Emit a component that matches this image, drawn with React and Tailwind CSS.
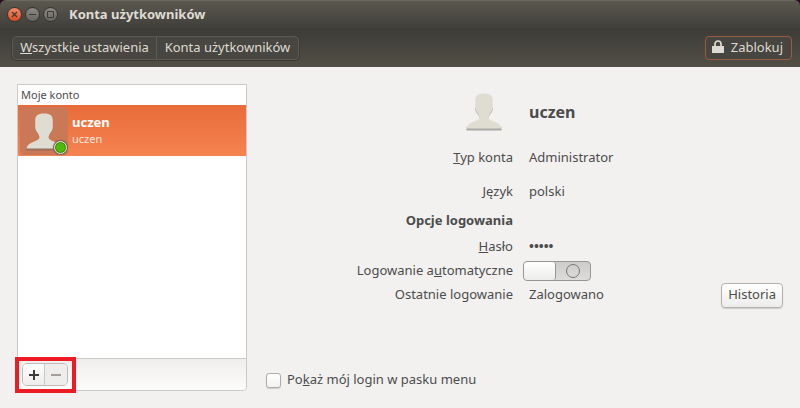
import React, { useState } from 'react'

function Person({ className }) {
  return (
    <svg viewBox="0 0 36 38" className={className} aria-hidden="true">
      <path
        d="M9 15c0 3 2 5.500 3.500 7l1 2.500h9l1-2.500c1.500-1.500 3.500-4 3.500-7zM.5 34v3.500h35V34z"
        fill="#6f6b64"
        fillOpacity="0.55"
      />
      <path
        d="M18 .5c-6.500 0-8.800 2-8.800 7.500v6c0 3 1.300 4.500 3 7 1.300 2 1.600 3.500.8 4.800-.8 1.200-3.500 2.200-6 3.200-3.500 1.500-6 3-6.500 6.500h35c-.5-3.500-3-5-6.500-6.500-2.500-1-5.200-2-6-3.200-.8-1.300-.5-2.800.8-4.800 1.700-2.500 3-4 3-7V8c0-5.500-2.300-7.500-8.800-7.500z"
        fill="#dfdcd2"
      />
    </svg>
  )
}

function WindowButton({ label, close, children }) {
  return (
    <button
      aria-label={label}
      className={`w-[15px] h-[15px] rounded-full border border-[#35332e] ${
        close
          ? 'bg-linear-to-b from-[#f58a68] to-[#dd4b1c]'
          : 'bg-linear-to-b from-[#8b8981] to-[#67655e]'
      }`}
    >
      <svg viewBox="0 0 13 13" className="w-full h-full" fill="none" stroke="#3c3b37">
        {children}
      </svg>
    </button>
  )
}

function Row({ label, className, children }) {
  return (
    <div className={`flex items-center gap-4 ${className}`}>
      <div className="w-[250px] shrink-0 text-right whitespace-nowrap">{label}</div>
      {children}
    </div>
  )
}

function TitleBar() {
  return (
    <header className="h-7 flex items-center gap-[3px] px-[7px] rounded-t-md border-t border-[#6a685f] bg-linear-to-b from-[#5b584f] to-[#403f3a]">
      <WindowButton label="Zamknij" close>
        <path d="M4 4l5 5M9 4l-5 5" strokeWidth="1.3" />
      </WindowButton>
      <WindowButton label="Minimalizuj">
        <path d="M3 6.500h7" />
      </WindowButton>
      <WindowButton label="Maksymalizuj">
        <path d="M3.500 3.500h6v6h-6z" />
      </WindowButton>
      <h1 className="ml-[8px] text-[13px] font-bold text-[#dfdbd2]">Konta użytkowników</h1>
    </header>
  )
}

function Toolbar() {
  return (
    <nav className="h-[39px] flex items-center justify-between pl-3 pr-2 pt-px text-[13px] text-[#dfdbd2] bg-linear-to-b from-[#3c3b37] to-[#524f46]">
      <div className="h-6 flex rounded border border-[#5c5a52] bg-[#474640] shadow-[0_0_0_1px_#3b3a35]">
        <button className="w-36 whitespace-nowrap border-r border-[#5c5a52]">
          <u>W</u>szystkie ustawienia
        </button>
        <button className="w-[141px] whitespace-nowrap">Konta użytkowników</button>
      </div>
      <button className="h-6 flex items-center gap-[7px] pl-[6px] pr-2 rounded border border-[#9b5b43] bg-[#464540]">
        <svg viewBox="0 0 12 14" className="w-3 h-[14px] mb-[2px]" aria-hidden="true">
          <path d="M3 7V4a3 3 0 0 1 6 0V7" fill="none" stroke="#dfdbd2" strokeWidth="1.7" />
          <path d="M0 6h12v7H0z" fill="#dfdbd2" />
        </svg>
        Zablokuj
      </button>
    </nav>
  )
}

function Sidebar() {
  return (
    <aside className="w-[230px] shrink-0 flex flex-col rounded-b border border-[#cbc9c5] bg-white">
      <h2 className="h-[20px] leading-[20px] px-[3px] text-[11px]">Moje konto</h2>
      <button className="h-[51px] flex items-center gap-1 pl-[2px] text-left text-white bg-linear-to-b from-[#e86c39] to-[#f58350]">
        <span className="relative w-12 h-12 flex items-end justify-center pb-[4px] rounded bg-[#cb7856]">
          <Person className="w-9 h-[38px] shrink-0" />
          <span className="absolute right-px bottom-px w-[13px] h-[13px] rounded-full border border-[#e6e4dc] bg-[#4eb909] shadow-[inset_0_0_0_1px_#3c8a10,0_0_1px_1px_#75604e]" />
        </span>
        <span className="pb-[2px]">
          <span className="block text-[13px] leading-[18px] font-bold">uczen</span>
          <span className="block text-[11px] leading-[15px] text-[#fce6dc]">uczen</span>
        </span>
      </button>
      <div className="flex-1" />
      <div className="relative h-8 flex items-center pl-1 rounded-b border-t border-[#cbc9c5] bg-linear-to-b from-[#efeeec] to-[#fcfcfb]">
        <div className="flex w-[46px] h-[23px] rounded-[5px] border border-[#bdbbb8] overflow-hidden">
          <button aria-label="Dodaj" className="w-[22px] flex items-center justify-center border-r border-[#c9c7c4] bg-linear-to-b from-white to-[#ededeb]">
            <svg viewBox="0 0 10 10" className="w-[10px] h-[10px]" stroke="#3c3c3c" strokeWidth="2">
              <path d="M5 0v10M0 5h10" />
            </svg>
          </button>
          <button aria-label="Usuń" className="flex-1 flex items-center justify-center bg-[#eeedeb]">
            <svg viewBox="0 0 10 10" className="w-[10px] h-[10px]" stroke="#a39d96" strokeWidth="2">
              <path d="M0 5h10" />
            </svg>
          </button>
        </div>
        <span className="absolute -left-[3px] -top-[2px] w-[61px] h-9 border-4 border-[#ed1c24] pointer-events-none" />
      </div>
    </aside>
  )
}

function Details() {
  const [autoLogin, setAutoLogin] = useState(false)
  const [showLogin, setShowLogin] = useState(false)

  return (
    <section className="flex-1 flex flex-col text-[13px]">
      <Row
        className="h-14"
        label={<Person className="inline-block w-9 h-[38px] mr-[11px]" />}
      >
        <h2 className="text-base font-bold">uczen</h2>
      </Row>
      <Row className="h-9" label={<><u>T</u>yp konta</>}>
        <span>Administrator</span>
      </Row>
      <Row className="h-8" label={<><u>J</u>ęzyk</>}>
        <span>polski</span>
      </Row>
      <Row className="h-[26px] font-bold" label="Opcje logowania" />
      <Row className="h-[26px]" label={<><u>H</u>asło</>}>
        <span className="font-bold">•••••</span>
      </Row>
      <Row
        className="h-[22px]"
        label={<label htmlFor="auto">Logowanie a<u>u</u>tomatyczne</label>}
      >
        <label className="-ml-[6px] flex w-[68px] h-5 rounded border border-[#989692] bg-linear-to-b from-[#cdccca] to-[#dddcda] overflow-hidden">
          <input
            id="auto"
            type="checkbox"
            role="switch"
            className="sr-only"
            checked={autoLogin}
            onChange={() => setAutoLogin(!autoLogin)}
          />
          <span className={`w-8 rounded-[3px] border-r border-[#989692] bg-linear-to-b from-white to-[#ececea] ${autoLogin ? 'order-2' : ''}`} />
          <span className="flex-1 flex items-center justify-center">
            <span className="w-[14px] h-[14px] rounded-full border border-[#777]" />
          </span>
        </label>
      </Row>
      <Row className="h-[26px]" label="Ostatnie logowanie">
        <span>Zalogowano</span>
        <button className="ml-auto h-[25px] px-[6px] rounded border border-[#b3b1ae] bg-linear-to-b from-white to-[#ececea] shadow-[0_1px_1px_#d0cecb]">
          Historia
        </button>
      </Row>
      <div className="mt-auto h-[22px] flex items-center gap-[6px] pl-[3px]">
        <input
          id="show"
          type="checkbox"
          className="appearance-none w-[15px] h-[15px] rounded-[3px] border border-[#aeacaa] bg-linear-to-b from-white to-[#f3f2f1] shadow-[0_1px_1px_#d0cecb] checked:bg-[#f07746]"
          checked={showLogin}
          onChange={() => setShowLogin(!showLogin)}
        />
        <label htmlFor="show">Po<u>k</u>aż mój login w pasku menu</label>
      </div>
    </section>
  )
}

export default function App() {
  return (
    <div className="min-h-screen flex flex-col bg-[#2c0a20] font-['Noto_Sans','Open_Sans',sans-serif] text-[#4c4c4c]">
      <TitleBar />
      <Toolbar />
      <main className="flex-1 flex gap-4 px-[17px] py-[17px] bg-[#f2f1f0]">
        <Sidebar />
        <Details />
      </main>
    </div>
  )
}
